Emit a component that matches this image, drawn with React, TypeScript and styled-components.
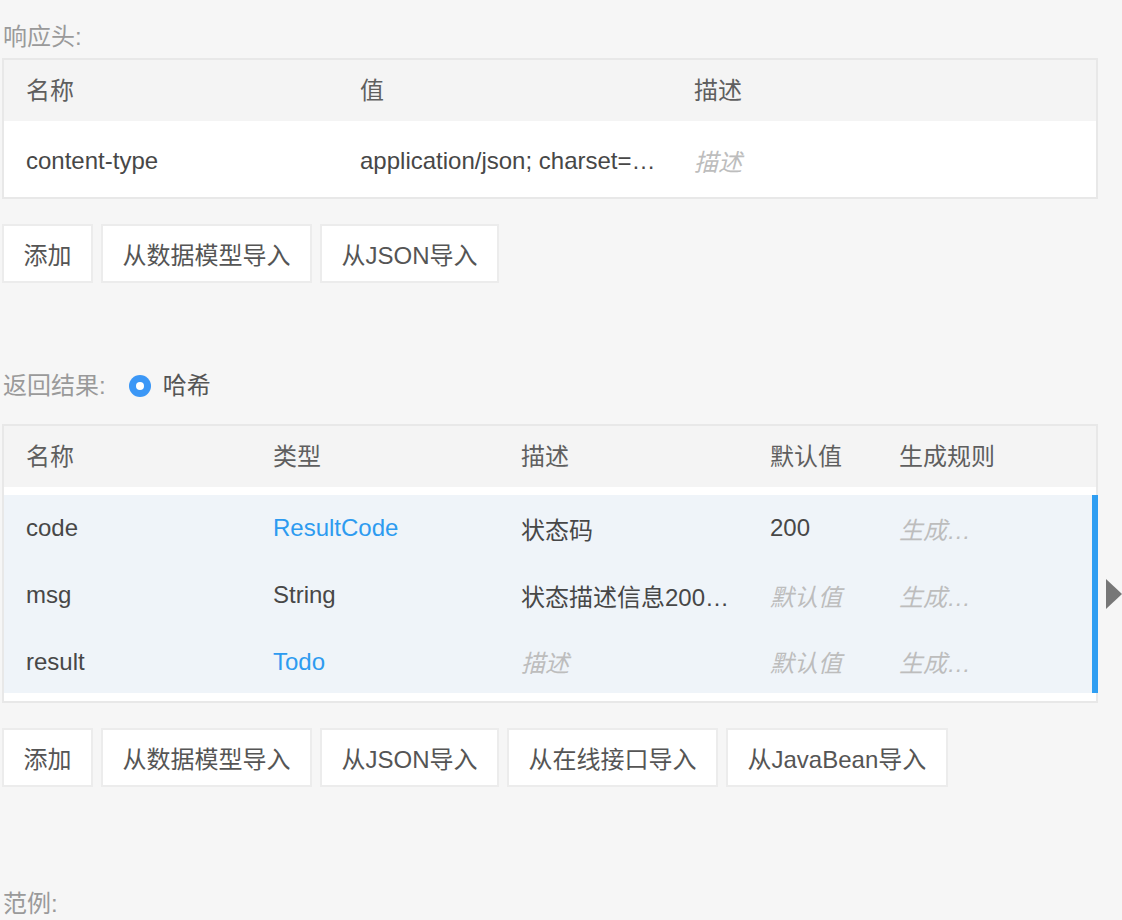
import React from 'react';
import styled, { createGlobalStyle } from 'styled-components';

const Global = createGlobalStyle`
  html, body { margin: 0; padding: 0; background: #f6f6f6; }
  body {
    font-family: "Liberation Sans", "Noto Sans CJK SC", sans-serif;
    font-size: 24px;
    color: #4a4a4a;
    overflow: hidden;
  }
`;

const Page = styled.div`
  width: 1122px;
  height: 920px;
  box-sizing: border-box;
  padding: 22px 0 0 2px;
  display: flex;
  flex-direction: column;
`;

const SectionLabel = styled.div<{ $mt?: number }>`
  height: 30px;
  line-height: 30px;
  color: #9a9a9a;
  padding-left: 1px;
  margin-top: ${(p) => p.$mt ?? 0}px;
  display: flex;
  align-items: center;
`;

const RadioGroup = styled.label`
  display: flex;
  align-items: center;
  margin-left: 23px;
  color: #555;
  gap: 12px;
`;

const RadioDot = styled.span`
  width: 22px;
  height: 22px;
  border-radius: 50%;
  background: #3b97f6;
  display: flex;
  align-items: center;
  justify-content: center;
  &::after {
    content: '';
    width: 8px;
    height: 8px;
    border-radius: 50%;
    background: #fff;
  }
`;

const TableRow = styled.div<{ $mt: number }>`
  display: flex;
  align-items: flex-start;
  margin-top: ${(p) => p.$mt}px;
`;

const Table = styled.div`
  width: 1096px;
  box-sizing: border-box;
  border: 2px solid #e8e8e8;
  background: #fff;
`;

const HeadRow = styled.div<{ $cols: string }>`
  display: grid;
  grid-template-columns: ${(p) => p.$cols};
  height: 61px;
  box-sizing: border-box;
  padding-bottom: 5px;
  align-items: center;
  background: #f4f4f4;
  color: #5f5f5f;
`;

const Body = styled.div`
  padding: 8px 0;
`;

const Selected = styled.div`
  background: #eff4f9;
  margin-right: -2px;
  border-right: 6px solid #2f9ef2;
`;

const Row = styled.div<{ $cols: string; $h: number; $shift?: number }>`
  display: grid;
  grid-template-columns: ${(p) => p.$cols};
  height: ${(p) => p.$h}px;
  box-sizing: border-box;
  padding-top: ${(p) => p.$shift ?? 0}px;
  align-items: center;
`;

const Cell = styled.div`
  padding-left: 22px;
  white-space: nowrap;
  min-width: 0;
`;

const Text = styled.div<{ $w?: number; $kind?: 'link' | 'ph' | 'plain' }>`
  white-space: nowrap;
  overflow: hidden;
  text-overflow: ellipsis;
  padding-right: 2px;
  ${(p) => (p.$w ? `width: ${p.$w}px;` : '')}
  color: ${(p) => (p.$kind === 'link' ? '#2d9bf0' : p.$kind === 'ph' ? '#bdbdbd' : '#474747')};
  font-style: ${(p) => (p.$kind === 'ph' ? 'italic' : 'normal')};
`;

const Handle = styled.div`
  margin-left: 8px;
  margin-top: 155px;
  width: 16px;
  height: 30px;
  display: flex;
`;

const ButtonBar = styled.div<{ $mt: number }>`
  display: flex;
  gap: 8px;
  margin-top: ${(p) => p.$mt}px;
`;

const Button = styled.button`
  height: 59px;
  box-sizing: border-box;
  padding: 0 19.5px;
  border: 2px solid #ececec;
  background: #fff;
  color: #555;
  font: inherit;
  white-space: nowrap;
  cursor: pointer;
`;

const COLS1 = '334px 334px 334px 1fr';
const COLS2 = '247px 248px 249px 129px 1fr';

type ResultRow = {
  name: string;
  type: string;
  link: boolean;
  desc?: string;
  def?: string;
  shift: number;
};

const results: ResultRow[] = [
  { name: 'code', type: 'ResultCode', link: true, desc: '状态码', def: '200', shift: 0 },
  { name: 'msg', type: 'String', link: false, desc: '状态描述信息200表示成功', shift: 2 },
  { name: 'result', type: 'Todo', link: true, shift: 3 },
];

export default function App() {
  return (
    <Page>
      <Global />
      <SectionLabel>响应头:</SectionLabel>
      <TableRow $mt={6}>
        <Table>
          <HeadRow $cols={COLS1}>
            <Cell>名称</Cell>
            <Cell>值</Cell>
            <Cell>描述</Cell>
            <Cell />
          </HeadRow>
          <Body>
            <Row $cols={COLS1} $h={60} $shift={3}>
              <Cell>
                <Text>content-type</Text>
              </Cell>
              <Cell>
                <Text $w={300}>application/json; charset=UTF-8</Text>
              </Cell>
              <Cell>
                <Text $kind="ph">描述</Text>
              </Cell>
              <Cell />
            </Row>
          </Body>
        </Table>
      </TableRow>
      <ButtonBar $mt={25}>
        <Button>添加</Button>
        <Button>从数据模型导入</Button>
        <Button>从JSON导入</Button>
      </ButtonBar>

      <SectionLabel $mt={88}>
        返回结果:
        <RadioGroup>
          <RadioDot />
          哈希
        </RadioGroup>
      </SectionLabel>
      <TableRow $mt={23}>
        <Table>
          <HeadRow $cols={COLS2}>
            <Cell>名称</Cell>
            <Cell>类型</Cell>
            <Cell>描述</Cell>
            <Cell>默认值</Cell>
            <Cell>生成规则</Cell>
          </HeadRow>
          <Body>
            <Selected>
              {results.map((r) => (
                <Row key={r.name} $cols={COLS2} $h={66} $shift={r.shift}>
                  <Cell>
                    <Text>{r.name}</Text>
                  </Cell>
                  <Cell>
                    <Text $kind={r.link ? 'link' : 'plain'}>{r.type}</Text>
                  </Cell>
                  <Cell>
                    <Text $w={215} $kind={r.desc ? 'plain' : 'ph'}>{r.desc ?? '描述'}</Text>
                  </Cell>
                  <Cell>
                    <Text $w={82} $kind={r.def ? 'plain' : 'ph'}>{r.def ?? '默认值'}</Text>
                  </Cell>
                  <Cell>
                    <Text $w={80} $kind="ph">生成规则</Text>
                  </Cell>
                </Row>
              ))}
            </Selected>
          </Body>
        </Table>
        <Handle>
          <svg width="16" height="30" viewBox="0 0 16 30">
            <polygon points="0,0 16,15 0,30" fill="#777" />
          </svg>
        </Handle>
      </TableRow>
      <ButtonBar $mt={25}>
        <Button>添加</Button>
        <Button>从数据模型导入</Button>
        <Button>从JSON导入</Button>
        <Button>从在线接口导入</Button>
        <Button>从JavaBean导入</Button>
      </ButtonBar>

      <SectionLabel $mt={102}>范例:</SectionLabel>
    </Page>
  );
}
